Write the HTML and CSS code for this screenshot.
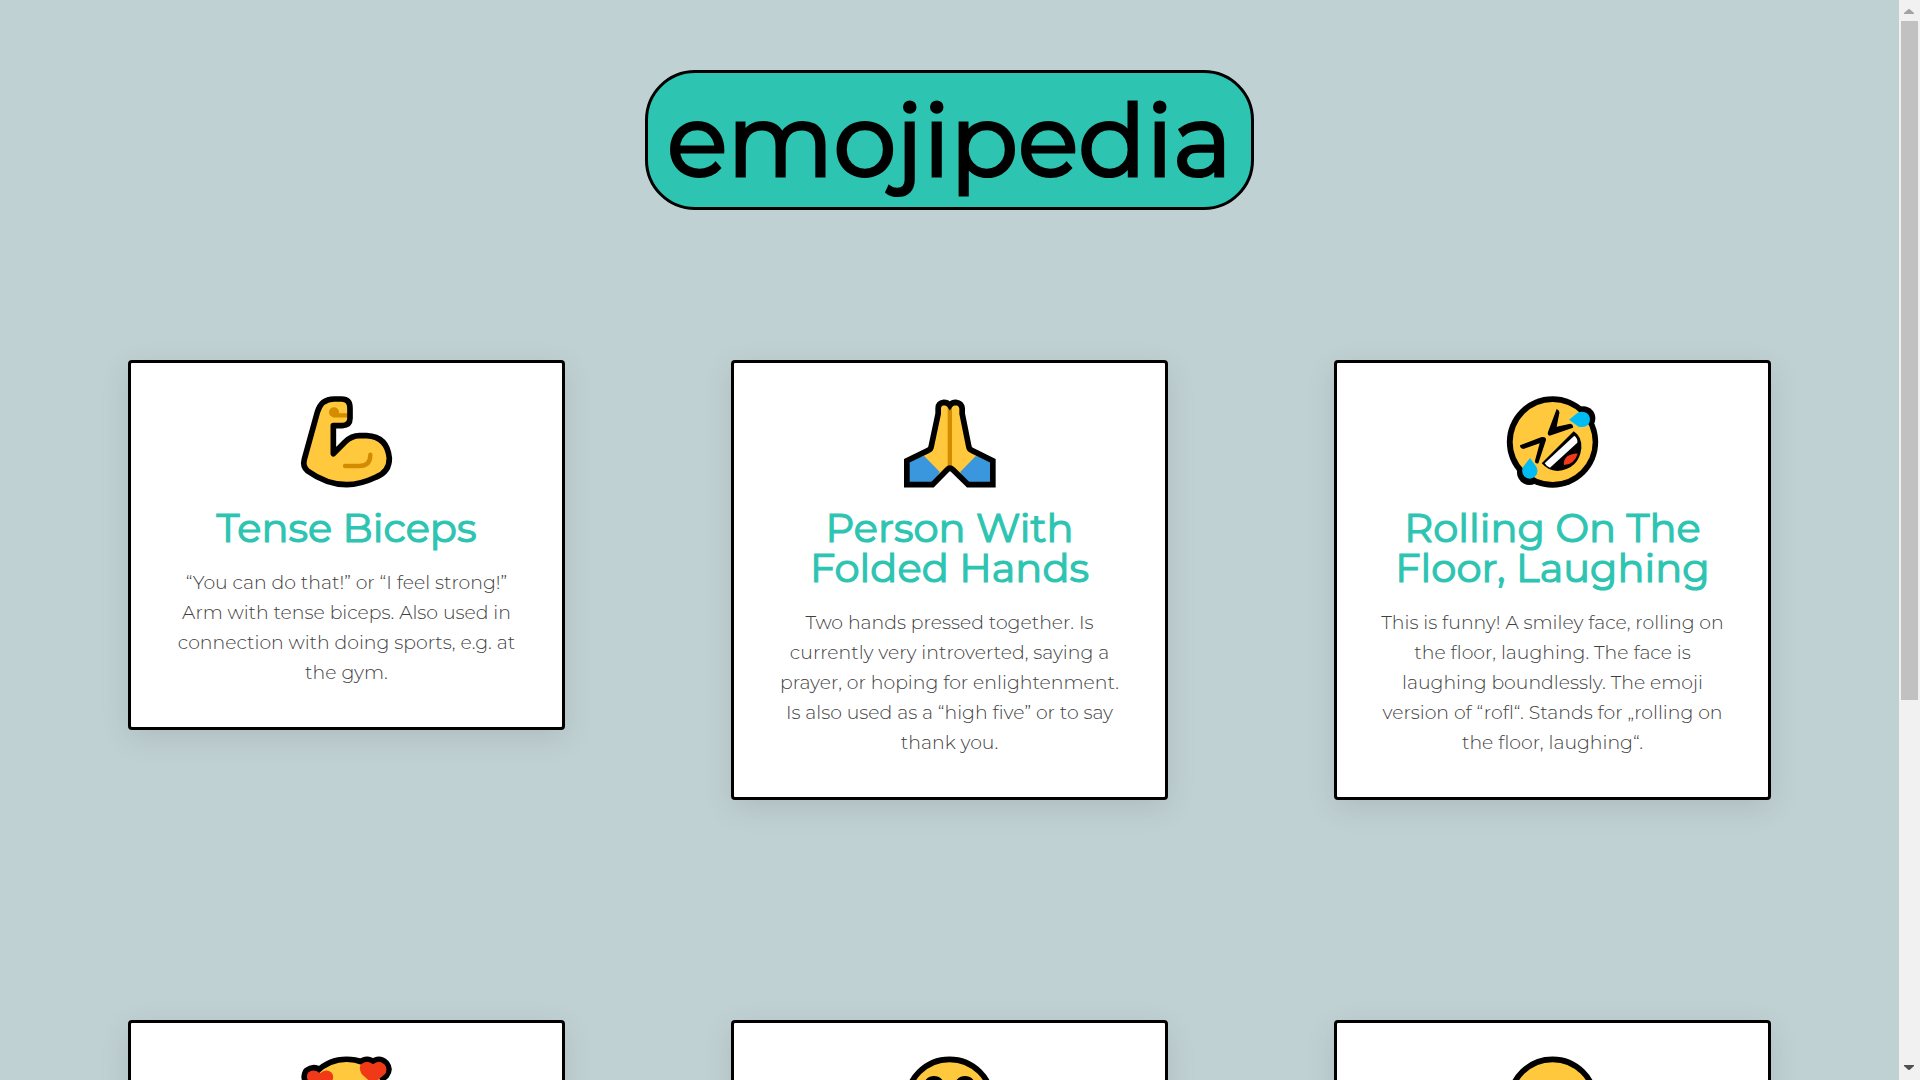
FILE: index.html
```html
<!DOCTYPE html>
<html lang="en">
<head>
<meta charset="utf-8">
<title>emojipedia</title>
<link rel="stylesheet" href="styles.css">
</head>
<body>
<main class="page">
  <header class="header"><h1 class="logo">emojipedia</h1></header>
  <section class="dictionary">
    <article class="term">
      <svg class="emoji" viewBox="6 0 390 360">
        <path d="M160 229V136H192Q210 136 210 118V80Q210 57 187 57H160Q120 57 111 98L72 240Q68 258 82 272Q140 315 205 315Q240 315 285 294Q329 277 329 235Q326 172 268 167H234Q205 167 185 196Z" fill="#ffc83d"/>
        <path d="M162 106h40M195 258h42q34 0 34-34" fill="none" stroke="#d38b00" stroke-width="13" stroke-linecap="round"/><circle cx="162" cy="97" r="15" fill="#d38b00"/>
        <path d="M160 221V137H187Q210 136 210 115V84Q210 57 185 57H162Q123 57 112 97L73 238Q67 260 83 273Q140 314 200 314Q240 314 289 291Q328 276 328 235Q322 170 260 167H238Q215 167 195 186Z" fill="none" stroke="#000" stroke-width="17" stroke-linejoin="round"/>
      </svg>
      <h2 class="name">Tense Biceps</h2>
      <p class="meaning">“You can do that!” or “I feel strong!”<br>Arm with tense biceps. Also used in<br>connection with doing sports, e.g. at<br>the gym.</p>
    </article>
    <article class="term">
      <svg class="emoji" viewBox="-16.5 0 390 360">
        <path d="M178 76Q172 67 160 67Q143 67 143 85V101L122 206L49 242V314H126L178 264L231 314H307V242L235 206L215 101V85Q213 67 196 67Q184 67 178 76Z" fill="#ffc83d"/>
        <path d="M101 228L49 242V314H126L148 276ZM256 228L307 242V314H231L209 276Z" fill="#3a96dd"/>
        <path d="M178 76V264" stroke="#d38b00" stroke-width="13"/>
        <path d="M178 76Q172 67 160 67Q143 69 143 85V101L122 200Q121 208 113 211L49 242V314H126L170 269Q178 261 187 269L233 314H307V242L244 211Q236 208 235 200L215 101V85Q213 69 196 67Q184 67 178 76Z" fill="none" stroke="#000" stroke-width="17"/>
      </svg>
      <h2 class="name">Person With<br>Folded Hands</h2>
      <p class="meaning">Two hands pressed together. Is<br>currently very introverted, saying a<br>prayer, or hoping for enlightenment.<br>Is also used as a “high five” or to say<br>thank you.</p>
    </article>
    <article class="term">
      <svg class="emoji" viewBox="-6 0 390 360">
        <circle cx="187.500" cy="186" r="137"/><circle cx="280" cy="115" r="36"/><circle cx="119" cy="277" r="38"/>
        <circle cx="188" cy="186" r="120" fill="#ffc83d"/>
        <path d="M200 87Q210 91 208 100L200 140L241 131Q251 133 249 143L179 167Q171 166 174 156ZM90 196L155 171Q169 169 168 180L145 250Q134 252 135 242L149 190L100 207Q90 206 90 196Z"/>
        <path d="M251 154Q276 169 274 205Q267 267 202 273Q174 272 155 250Z"/>
        <path d="M253 167Q264 176 262 188L180 263Q170 260 164 250Z" fill="#fff"/>
        <path d="M263 221Q252 218 232 229Q219 240 222 255Q254 253 263 221Z" fill="#f03a17"/>
        <path d="M237 119L262 99Q275 91 290 99Q304 110 298 128Q289 145 266 140ZM120 234L139 260Q147 276 136 289Q120 303 104 290Q92 278 99 261Z" fill="#00bcf2"/>
      </svg>
      <h2 class="name">Rolling On The<br>Floor, Laughing</h2>
      <p class="meaning">This is funny! A smiley face, rolling on<br>the floor, laughing. The face is<br>laughing boundlessly. The emoji<br>version of “rofl“. Stands for „rolling on<br>the floor, laughing“.</p>
    </article>
    <article class="term">
      <svg class="emoji" viewBox="6 0 390 360">
        <g stroke="#000" stroke-width="33" stroke-linejoin="round"><circle cx="200" cy="186" r="120"/><path d="M120 153L88 128Q76 112 84 98Q102 84 120 100Q138 84 155 98Q165 112 153 128Z"/><path d="M279 123L247 102Q235 88 243 74Q261 59 279 74Q297 59 313 74Q324 88 313 102Z"/></g>
        <circle cx="200" cy="186" r="120" fill="#ffc83d"/>
        <path d="M120 153L88 128Q76 112 84 98Q102 84 120 100Q138 84 155 98Q165 112 153 128ZM268 123L245 102Q235 84 243 73Q261 58 279 73Q297 58 313 73Q324 86 316 101L290 123Z" fill="#f03a17"/>
      </svg>
    </article>
    <article class="term">
      <svg class="emoji" viewBox="-15 0 390 360">
        <circle cx="178.500" cy="186" r="128" fill="#ffc83d" stroke="#000" stroke-width="17"/><circle cx="132" cy="141" r="33"/><circle cx="225" cy="141" r="33"/>
      </svg>
    </article>
    <article class="term">
      <svg class="emoji" viewBox="-6 0 390 360">
        <circle cx="187.500" cy="186" r="128" fill="#ffc83d" stroke="#000" stroke-width="17"/>
      </svg>
    </article>
  </section>
</main>
<aside class="scrollbar">
  <svg class="arrow" viewBox="0 0 21 21"><path d="M5 14v-1l4.500-4h1l4.500 4v1z" fill="#a3a3a3"/></svg>
  <div class="thumb"></div>
  <svg class="arrow arrow-down" viewBox="0 0 21 21"><path d="M5 6h10v1l-4.500 4h-1L5 7z" fill="#505050"/></svg>
</aside>
</body>
</html>
```
FILE: styles.css
```css
* { box-sizing: border-box; }
body {
  display: flex;
  height: 1080px;
  margin: 0;
  overflow: hidden;
  background: #c0d1d4;
  font-family: Montserrat, Inter, sans-serif;
}
.page { flex: 1; height: 1080px; padding: 70px 128px 0; overflow: hidden; }
.header { display: flex; justify-content: center; }
.logo {
  width: 609px;
  height: 140px;
  margin: 0;
  border: 3px solid #000;
  border-radius: 50px;
  background: #2ec4b2;
  font-size: 100px;
  font-weight: 400;
  line-height: 134px;
  text-align: center;
  -webkit-text-stroke: 3.1px #000;
}
.dictionary {
  display: grid;
  grid-template-columns: repeat(3, 437px);
  justify-content: space-between;
  align-items: start;
  row-gap: 220px;
  margin-top: 150px;
}
.term {
  min-height: 370px;
  padding: 17px 0 39px;
  border: 3px solid #000;
  border-radius: 4px;
  background: #fff;
  box-shadow: 0 8px 30px rgba(0, 0, 0, 0.1);
  text-align: center;
}
.emoji { display: block; width: 130px; height: 120px; margin: 0 auto 8px; }
.name {
  margin: 0 0 20px;
  color: #2ec4b2;
  font-size: 40px;
  font-weight: 400;
  line-height: 40px;
  white-space: nowrap;
  -webkit-text-stroke: 1.2px #2ec4b2;
}
.meaning {
  margin: 0;
  color: #404040;
  font-size: 18.85px;
  font-weight: 300;
  line-height: 30px;
  white-space: nowrap;
}
.scrollbar { display: flex; flex-direction: column; width: 21px; background: #f1f1f1; }
.arrow { display: block; width: 21px; height: 21px; }
.thumb { width: 17px; height: 679px; margin-left: 2px; background: #c1c1c1; }
.arrow-down { margin-top: auto; }
```
